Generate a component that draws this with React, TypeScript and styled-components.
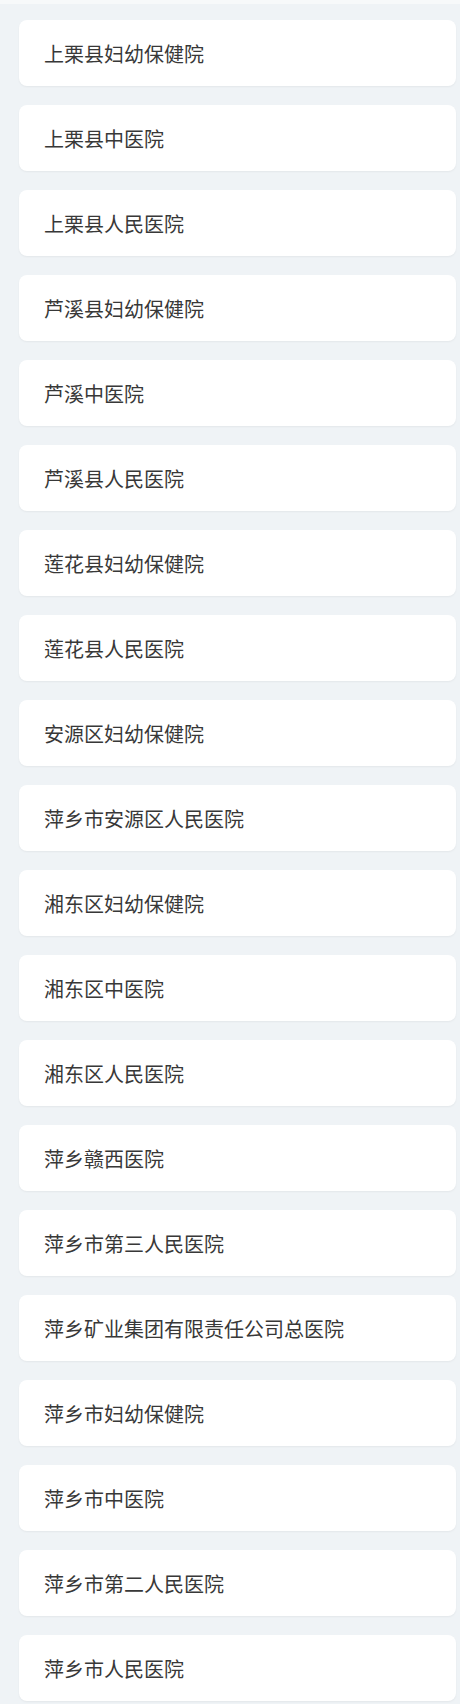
import styled, { createGlobalStyle } from 'styled-components';

const hospitals = [
  '上栗县妇幼保健院',
  '上栗县中医院',
  '上栗县人民医院',
  '芦溪县妇幼保健院',
  '芦溪中医院',
  '芦溪县人民医院',
  '莲花县妇幼保健院',
  '莲花县人民医院',
  '安源区妇幼保健院',
  '萍乡市安源区人民医院',
  '湘东区妇幼保健院',
  '湘东区中医院',
  '湘东区人民医院',
  '萍乡赣西医院',
  '萍乡市第三人民医院',
  '萍乡矿业集团有限责任公司总医院',
  '萍乡市妇幼保健院',
  '萍乡市中医院',
  '萍乡市第二人民医院',
  '萍乡市人民医院',
];

const GlobalStyle = createGlobalStyle`
  html, body {
    margin: 0;
    padding: 0;
    background: #eff3f6;
  }
  body {
    font-family: "Noto Sans CJK SC", "Noto Sans", sans-serif;
  }
`;

const Page = styled.div`
  min-height: 1704px;
  background: #eff3f6;
  border-top: 4px solid #f7f9fa;
  box-sizing: border-box;
`;

const List = styled.ul`
  list-style: none;
  margin: 0;
  padding: 16px 4px 0 19px;
  display: flex;
  flex-direction: column;
  gap: 19px;
`;

const Card = styled.li`
  height: 66px;
  display: flex;
  align-items: center;
  padding: 0 25px;
  background: #ffffff;
  border-radius: 8px;
  box-shadow: 0 1px 2px rgba(0, 0, 0, 0.05);
  font-size: 20px;
  color: #383838;
  box-sizing: border-box;
`;

export default function App() {
  return (
    <>
      <GlobalStyle />
      <Page>
        <List>
          {hospitals.map((name) => (
            <Card key={name}>{name}</Card>
          ))}
        </List>
      </Page>
    </>
  );
}
